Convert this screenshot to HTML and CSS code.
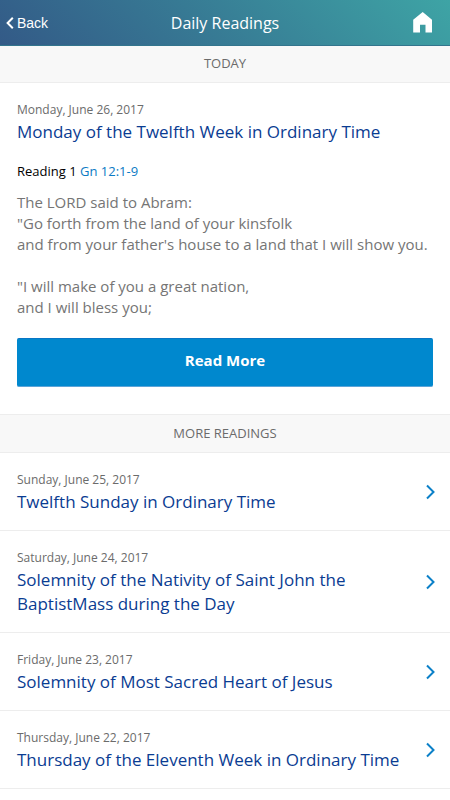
FILE: index.html
```html
<!DOCTYPE html>
<html lang="en">
<head>
<meta charset="utf-8">
<meta name="viewport" content="width=device-width, initial-scale=1">
<title>Daily Readings</title>
<link rel="stylesheet" href="styles.css">
</head>
<body>
<header class="topbar">
  <a class="back" href="#">
    <svg class="back-icon" viewBox="0 0 8 12" aria-hidden="true"><path d="M6.800 .8 1.600 6l5.200 5.200"/></svg>
    <span>Back</span>
  </a>
  <h1 class="topbar-title">Daily Readings</h1>
  <a class="home" href="#" aria-label="Home">
    <svg class="home-icon" viewBox="0 0 20 21" aria-hidden="true"><path d="M9.700 0 19 7.800V20.600H12.500V12.800H7V20.600H.2V7.800Z"/></svg>
  </a>
</header>
<main>
  <h2 class="section-label">TODAY</h2>
  <article class="today">
    <p class="date">Monday, June 26, 2017</p>
    <h3 class="title">Monday of the Twelfth Week in Ordinary Time</h3>
    <p class="citation">Reading 1 <a class="citation-link" href="#">Gn 12:1-9</a></p>
    <p class="passage">The LORD said to Abram:<br>"Go forth from the land of your kinsfolk<br>and from your father's house to a land that I will show you.<br><br>"I will make of you a great nation,<br>and I will bless you;</p>
    <button class="read-more" type="button">Read More</button>
  </article>
  <h2 class="section-label section-label-more">MORE READINGS</h2>
  <ul class="readings">
    <li><a class="reading" href="#">
      <span class="reading-text"><span class="date">Sunday, June 25, 2017</span><span class="title">Twelfth Sunday in Ordinary Time</span></span>
      <svg class="chevron" viewBox="0 0 9 16" aria-hidden="true"><path d="M1 1.500 7.500 8 1 14.500"/></svg>
    </a></li>
    <li><a class="reading" href="#">
      <span class="reading-text"><span class="date">Saturday, June 24, 2017</span><span class="title">Solemnity of the Nativity of Saint John the BaptistMass during the Day</span></span>
      <svg class="chevron" viewBox="0 0 9 16" aria-hidden="true"><path d="M1 1.500 7.500 8 1 14.500"/></svg>
    </a></li>
    <li><a class="reading" href="#">
      <span class="reading-text"><span class="date">Friday, June 23, 2017</span><span class="title">Solemnity of Most Sacred Heart of Jesus</span></span>
      <svg class="chevron" viewBox="0 0 9 16" aria-hidden="true"><path d="M1 1.500 7.500 8 1 14.500"/></svg>
    </a></li>
    <li><a class="reading" href="#">
      <span class="reading-text"><span class="date">Thursday, June 22, 2017</span><span class="title">Thursday of the Eleventh Week in Ordinary Time</span></span>
      <svg class="chevron" viewBox="0 0 9 16" aria-hidden="true"><path d="M1 1.500 7.500 8 1 14.500"/></svg>
    </a></li>
  </ul>
</main>
</body>
</html>
```
FILE: styles.css
```css
* { box-sizing: border-box; }
body {
  margin: 0;
  background: #fff;
  color: #000;
  font-family: "Open Sans", sans-serif;
}
h1, h2, h3, p, ul { margin: 0; padding: 0; font-weight: 400; }
ul { list-style: none; }
a { color: inherit; text-decoration: none; }
svg { display: block; flex: none; }

.topbar {
  display: grid;
  grid-template-columns: 1fr auto 1fr;
  align-items: center;
  height: 46px;
  padding: 0 17px 0 6px;
  background: linear-gradient(45deg, #335a87 0%, #377a94 45%, #3ea4a5 100%);
  border-bottom: 1px solid #33758d;
  color: #fff;
}
.back {
  display: flex;
  align-items: center;
  gap: 3px;
  font: 14px/20px "Liberation Sans", sans-serif;
}
.back-icon { width: 8px; height: 12px; fill: none; stroke: #fff; stroke-width: 2; }
.topbar-title { font-size: 16px; line-height: 24px; padding-left: 11px; }
.home { justify-self: end; }
.home-icon { width: 20px; height: 21px; fill: #fff; }

.section-label {
  height: 37px;
  background: #f8f8f8;
  border-bottom: 1px solid #ededed;
  color: #6b6b6b;
  font-size: 13px;
  line-height: 35px;
  text-align: center;
}
.section-label-more {
  height: 39px;
  border-top: 1px solid #ededed;
  line-height: 37px;
}

.today { padding: 17px 17px 27px; }
.date {
  display: block;
  color: #6b6b6b;
  font-size: 12px;
  line-height: 20px;
}
.title {
  display: block;
  color: #0a3c92;
  font-size: 17px;
  line-height: 24px;
}
.citation { margin-top: 17px; font-size: 13px; line-height: 20px; }
.citation-link { color: #0b7ac4; }
.passage {
  margin-top: 11px;
  color: #757575;
  font-size: 15px;
  line-height: 21px;
}
.read-more {
  display: block;
  width: 100%;
  margin-top: 20px;
  padding: 10px 12px 14px;
  border: 0;
  border-top: 1px solid #0876c5;
  border-bottom: 1px solid #5ba4d8;
  border-radius: 2px;
  background: #0088ce;
  color: #fff;
  font: 700 15px/23px "Open Sans", sans-serif;
}

.reading {
  display: flex;
  align-items: center;
  gap: 24px;
  padding: 17px 15px 16px 17px;
  border-bottom: 1px solid #ededed;
}
.reading-text { flex: 1; }
.chevron { width: 9px; height: 16px; fill: none; stroke: #0b80c8; stroke-width: 2; }
```
